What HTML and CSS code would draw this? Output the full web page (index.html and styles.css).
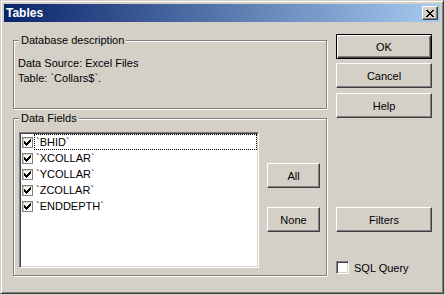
FILE: index.html
```html
<!DOCTYPE html>
<html lang="en">
<head>
  <meta charset="UTF-8" />
  <title>Tables</title>
  <link rel="stylesheet" href="styles.css">
</head>
<body>

  <!-- Dialog window -->
  <div class="window">

    <!-- Title bar -->
    <div class="titlebar">
      <span class="title">Tables</span>
      <button class="close-btn">
        <svg width="8" height="7" viewBox="0 0 8 7" shape-rendering="crispEdges">
          <path d="M0 0h2v1h-2z M1 1h2v1h-2z M2 2h4v1h-4z M3 3h2v1h-2z M2 4h4v1h-4z M1 5h2v1h-2z M0 6h2v1h-2z M6 0h2v1h-2z M5 1h2v1h-2z M5 5h2v1h-2z M6 6h2v1h-2z" fill="#000"/>
        </svg>
      </button>
    </div>

    <div class="client">

      <!-- Left column: group boxes -->
      <div class="left-col">
        <div class="group group-desc">
          <span class="legend">Database description</span>
          <p>Data Source: Excel Files</p>
          <p>Table: `Collars$`.</p>
        </div>

        <div class="group group-fields">
          <span class="legend">Data Fields</span>
          <ul class="listbox">
            <li class="list-item">
              <span class="list-check"><svg class="tick" width="7" height="7" viewBox="0 0 7 7" shape-rendering="crispEdges"><path d="M0 2h1v3h-1z M1 3h1v3h-1z M2 4h1v3h-1z M3 3h1v3h-1z M4 2h1v3h-1z M5 1h1v3h-1z M6 0h1v3h-1z"/></svg></span>
              <span class="item-text focus">`BHID`</span>
            </li>
            <li class="list-item">
              <span class="list-check"><svg class="tick" width="7" height="7" viewBox="0 0 7 7" shape-rendering="crispEdges"><path d="M0 2h1v3h-1z M1 3h1v3h-1z M2 4h1v3h-1z M3 3h1v3h-1z M4 2h1v3h-1z M5 1h1v3h-1z M6 0h1v3h-1z"/></svg></span>
              <span class="item-text">`XCOLLAR`</span>
            </li>
            <li class="list-item">
              <span class="list-check"><svg class="tick" width="7" height="7" viewBox="0 0 7 7" shape-rendering="crispEdges"><path d="M0 2h1v3h-1z M1 3h1v3h-1z M2 4h1v3h-1z M3 3h1v3h-1z M4 2h1v3h-1z M5 1h1v3h-1z M6 0h1v3h-1z"/></svg></span>
              <span class="item-text">`YCOLLAR`</span>
            </li>
            <li class="list-item">
              <span class="list-check"><svg class="tick" width="7" height="7" viewBox="0 0 7 7" shape-rendering="crispEdges"><path d="M0 2h1v3h-1z M1 3h1v3h-1z M2 4h1v3h-1z M3 3h1v3h-1z M4 2h1v3h-1z M5 1h1v3h-1z M6 0h1v3h-1z"/></svg></span>
              <span class="item-text">`ZCOLLAR`</span>
            </li>
            <li class="list-item">
              <span class="list-check"><svg class="tick" width="7" height="7" viewBox="0 0 7 7" shape-rendering="crispEdges"><path d="M0 2h1v3h-1z M1 3h1v3h-1z M2 4h1v3h-1z M3 3h1v3h-1z M4 2h1v3h-1z M5 1h1v3h-1z M6 0h1v3h-1z"/></svg></span>
              <span class="item-text">`ENDDEPTH`</span>
            </li>
          </ul>
          <div class="field-btns">
            <button class="btn btn-all">All</button>
            <button class="btn btn-none">None</button>
          </div>
        </div>
      </div>

      <!-- Right column: dialog buttons -->
      <div class="right-col">
        <button class="btn btn-default">OK</button>
        <button class="btn btn-cancel">Cancel</button>
        <button class="btn btn-help">Help</button>
        <button class="btn btn-filters">Filters</button>
        <label class="sql-row"><span class="checkbox"></span>SQL Query</label>
      </div>

    </div>
  </div>

</body>
</html>
```

FILE: styles.css
```css
/* Page base */
body {
  margin: 0;
  background: #d4d0c8;
  font-family: "Liberation Sans", Arial, sans-serif;
  font-size: 11px;
  color: #000;
}

/* Window frame with classic 3D border */
.window {
  box-sizing: border-box;
  width: 444px;
  height: 294px;
  background: #d4d0c8;
  border-top: 1px solid #d4d0c8;
  border-left: 1px solid #d4d0c8;
  border-right: 1px solid #404040;
  border-bottom: 1px solid #404040;
  box-shadow: inset 1px 1px 0 #fff, inset -1px -1px 0 #808080;
  padding: 3px;
}

/* Title bar */
.titlebar {
  height: 18px;
  display: flex;
  align-items: center;
  justify-content: space-between;
  background: linear-gradient(to right, #0a246a, #a6caf0);
  padding: 0 2px 0 2px;
}

.title {
  color: #fff;
  font-weight: bold;
  font-size: 12px;
}

.close-btn {
  box-sizing: border-box;
  width: 16px;
  height: 14px;
  padding: 0;
  background: #d4d0c8;
  border-top: 1px solid #fff;
  border-left: 1px solid #fff;
  border-right: 1px solid #404040;
  border-bottom: 1px solid #404040;
  box-shadow: inset -1px -1px 0 #808080;
  display: flex;
  align-items: center;
  justify-content: center;
}

.close-btn svg {
  display: block;
  margin-left: -1px;
}

/* Client area layout */
.client {
  display: flex;
  gap: 9px;
  padding: 12px 0 0 9px;
}

.left-col {
  width: 314px;
}

.right-col {
  width: 96px;
  display: flex;
  flex-direction: column;
}

/* Etched group box */
.group {
  position: relative;
  box-sizing: border-box;
  border: 1px solid #808080;
  box-shadow: 1px 1px 0 #fff, inset 1px 1px 0 #fff;
}

.legend {
  position: absolute;
  top: -7px;
  left: 5px;
  padding: 0 2px;
  line-height: 13px;
  background: #d4d0c8;
}

.group-desc {
  margin-top: 6px;
  height: 69px;
  padding: 15px 4px 0;
}

.group-desc p {
  margin: 0;
  line-height: 15px;
}

.group-fields {
  margin-top: 9px;
  height: 158px;
  display: flex;
  padding: 13px 5px 0;
}

/* List box with checkboxes */
.listbox {
  box-sizing: border-box;
  width: 240px;
  height: 136px;
  margin: 0;
  padding: 1px 0 0 1px;
  list-style: none;
  background: #fff;
  border-top: 1px solid #808080;
  border-left: 1px solid #808080;
  border-right: 1px solid #fff;
  border-bottom: 1px solid #fff;
  box-shadow: inset 1px 1px 0 #404040, inset -1px -1px 0 #d4d0c8;
}

.list-item {
  display: flex;
  align-items: center;
  height: 16px;
  padding-left: 1px;
}

.list-check {
  box-sizing: border-box;
  width: 11px;
  height: 11px;
  margin-right: 1px;
  border: 1px solid #808080;
  box-shadow: inset 1px 1px 0 #d4d0c8;
  background: #fff;
  display: flex;
  align-items: center;
  justify-content: center;
}

.tick {
  display: block;
  fill: #000;
}

.item-text {
  box-sizing: border-box;
  flex: 1;
  height: 16px;
  line-height: 14px;
  padding: 0 1px;
  margin-right: 1px;
  border: 1px solid transparent;
}

.item-text.focus {
  border: 1px dotted #000;
}

.field-btns {
  display: flex;
  flex-direction: column;
  margin-left: 8px;
  padding-top: 31px;
}

/* Classic raised push button */
.btn {
  box-sizing: border-box;
  height: 25px;
  padding: 0;
  font-family: "Liberation Sans", Arial, sans-serif;
  font-size: 11px;
  color: #000;
  background: #d4d0c8;
  border-top: 1px solid #fff;
  border-left: 1px solid #fff;
  border-right: 1px solid #404040;
  border-bottom: 1px solid #404040;
  box-shadow: inset -1px -1px 0 #808080;
}

.btn-all,
.btn-none {
  width: 53px;
}

.btn-none {
  margin-top: 19px;
}

.btn-default {
  border: 1px solid #000;
  box-shadow: inset 1px 1px 0 #fff, inset -1px -1px 0 #404040, inset -2px -2px 0 #808080;
}

.btn-cancel {
  margin-top: 4px;
}

.btn-help {
  margin-top: 5px;
}

.btn-filters {
  margin-top: 89px;
}

/* SQL Query checkbox */
.sql-row {
  display: flex;
  align-items: center;
  margin-top: 29px;
  height: 13px;
}

.checkbox {
  box-sizing: border-box;
  width: 13px;
  height: 13px;
  margin-right: 5px;
  background: #fff;
  border-top: 1px solid #808080;
  border-left: 1px solid #808080;
  border-right: 1px solid #fff;
  border-bottom: 1px solid #fff;
  box-shadow: inset 1px 1px 0 #404040, inset -1px -1px 0 #d4d0c8;
}
```
